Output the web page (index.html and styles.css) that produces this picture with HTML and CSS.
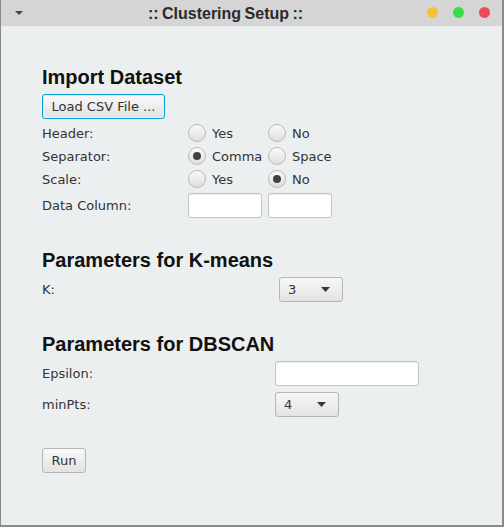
FILE: index.html
```html
<!DOCTYPE html>
<html>
<head>
<meta charset="utf-8">
<link rel="stylesheet" href="styles.css">
</head>
<body>
<div class="window">
  <div class="titlebar">
    <svg class="menu-arrow" width="8" height="5" viewBox="0 0 8 5"><path d="M0 0 L8 0 L4 4 Z" fill="#444"/></svg>
    <div class="title">:: Clustering Setup ::</div>
    <div class="lights">
      <span class="light yellow"></span>
      <span class="light green"></span>
      <span class="light red"></span>
    </div>
  </div>
  <div class="content">
    <h2 class="heading">Import Dataset</h2>
    <div class="grid grid-import">
      <div class="btn focused btn-load">Load CSV File ...</div>
      <div class="label">Header:</div>
      <div class="radio"><span class="dot"></span><span>Yes</span></div>
      <div class="radio"><span class="dot"></span><span>No</span></div>
      <div class="label">Separator:</div>
      <div class="radio"><span class="dot on"></span><span>Comma</span></div>
      <div class="radio"><span class="dot"></span><span>Space</span></div>
      <div class="label">Scale:</div>
      <div class="radio"><span class="dot"></span><span>Yes</span></div>
      <div class="radio"><span class="dot on"></span><span>No</span></div>
      <div class="label label-field">Data Column:</div>
      <div class="field field-a"></div>
      <div class="field field-b"></div>
    </div>

    <h2 class="heading heading-gap">Parameters for K-means</h2>
    <div class="grid grid-k">
      <div class="label">K:</div>
      <div class="combo"><span>3</span><svg width="9" height="5" viewBox="0 0 9 5"><path d="M0 0 L9 0 L4.5 5 Z" fill="#3a3a3a"/></svg></div>
    </div>

    <h2 class="heading heading-gap">Parameters for DBSCAN</h2>
    <div class="grid grid-db">
      <div class="label">Epsilon:</div>
      <div class="field field-eps"></div>
      <div class="label">minPts:</div>
      <div class="combo"><span>4</span><svg width="9" height="5" viewBox="0 0 9 5"><path d="M0 0 L9 0 L4.5 5 Z" fill="#3a3a3a"/></svg></div>
    </div>

    <div class="btn btn-run">Run</div>
  </div>
</div>
</body>
</html>
```

FILE: styles.css
```css
html, body {
  margin: 0;
  padding: 0;
  background: #eceff0;
}

.window {
  width: 504px;
  height: 527px;
  box-sizing: border-box;
  border-left: 1px solid #8a8a8a;
  border-right: 2px solid #8a8a8a;
  border-bottom: 2px solid #8a8a8a;
  background: #eceff0;
  display: flex;
  flex-direction: column;
  overflow: hidden;
}

.titlebar {
  height: 26px;
  flex: none;
  background: #d5d5d5;
  position: relative;
  display: flex;
  align-items: center;
  justify-content: center;
  padding-right: 52px;
}

.menu-arrow {
  position: absolute;
  left: 14px;
  top: 11px;
}

.title {
  font-family: "Liberation Sans", Arial, sans-serif;
  font-weight: bold;
  font-size: 16px;
  color: #2a2a2a;
  line-height: 26px;
  padding-top: 1px;
  word-spacing: -1px;
}

.lights {
  position: absolute;
  right: 12px;
  top: 7px;
  display: flex;
  gap: 15px;
}

.light {
  width: 11px;
  height: 11px;
  border-radius: 50%;
  display: block;
}
.light.yellow { background: #f6c032; }
.light.green { background: #38df47; }
.light.red { background: #ef4a55; }

.content {
  padding: 40px 0 0 41px;
  display: flex;
  flex-direction: column;
  align-items: flex-start;
  font-family: "DejaVu Sans", sans-serif;
  font-size: 13px;
  color: #333;
}

.heading {
  margin: 0 0 5px 0;
  font-family: "Liberation Sans", Arial, sans-serif;
  font-weight: bold;
  font-size: 20px;
  line-height: 23px;
  color: #111;
}

.heading-gap {
  margin-top: 31px;
}

.grid {
  display: grid;
  row-gap: 5px;
  align-items: center;
}

.grid-import {
  grid-template-columns: 140px 74px 64px;
  grid-template-rows: 25px 18px 18px 18px 25px;
  column-gap: 6px;
}

.btn-load {
  grid-column: 1 / span 3;
  justify-self: start;
  margin-bottom: 1px;
}

.grid-k {
  grid-template-columns: 237px 64px;
  grid-template-rows: 25px;
}

.grid-db {
  grid-template-columns: 233px 144px;
  grid-template-rows: 25px 25px;
  row-gap: 6px;
}

.label {
  white-space: nowrap;
  line-height: 15px;
}

.btn {
  box-sizing: border-box;
  height: 25px;
  border: 1px solid #b6b6b6;
  border-radius: 3px;
  background: linear-gradient(#f9f9f9, #e2e2e2);
  display: flex;
  align-items: center;
  justify-content: center;
  color: #333;
  white-space: nowrap;
}

.btn.focused {
  border: 1px solid #039ed3;
  box-shadow: inset 0 0 0 1px #e6f4fa;
}

.btn-load {
  width: 123px;
}

.btn-run {
  width: 44px;
  margin-top: 31px;
}

.radio {
  display: flex;
  align-items: center;
  gap: 6px;
  white-space: nowrap;
  height: 18px;
}

.dot {
  box-sizing: border-box;
  width: 18px;
  height: 18px;
  flex: none;
  border-radius: 50%;
  border: 1px solid #b9b9b9;
  background: linear-gradient(#fafafa, #dedede);
  display: flex;
  align-items: center;
  justify-content: center;
}

.dot.on::after {
  content: "";
  width: 8px;
  height: 8px;
  border-radius: 50%;
  background: #404040;
}

.field {
  box-sizing: border-box;
  height: 25px;
  border: 1px solid #c3c3c3;
  border-radius: 3px;
  background: #fff;
  box-shadow: inset 0 1px 1px #ececec;
}

.field-eps {
  width: 144px;
}

.combo {
  box-sizing: border-box;
  width: 64px;
  height: 25px;
  border: 1px solid #b6b6b6;
  border-radius: 3px;
  background: linear-gradient(#f7f7f7, #e3e3e3);
  display: flex;
  align-items: center;
  justify-content: space-between;
  padding: 0 12px 0 8px;
  color: #333;
}
```
